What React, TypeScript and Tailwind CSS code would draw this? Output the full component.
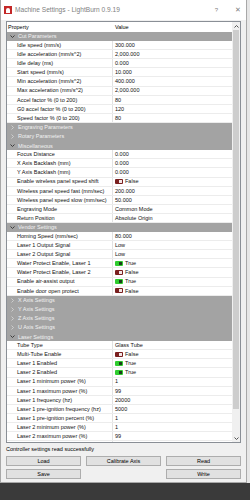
type Row =
  | { group: string; open: boolean }
  | { name: string; value: string; toggle?: boolean };

const rows: Row[] = [
  { group: "Cut Parameters", open: true },
  { name: "Idle speed (mm/s)", value: "300.000" },
  { name: "Idle acceleration (mm/s^2)", value: "2,000.000" },
  { name: "Idle delay (ms)", value: "0.000" },
  { name: "Start speed (mm/s)", value: "10.000" },
  { name: "Min acceleration (mm/s^2)", value: "400.000" },
  { name: "Max acceleration (mm/s^2)", value: "2,000.000" },
  { name: "Accel factor % (0 to 200)", value: "80" },
  { name: "G0 accel factor % (0 to 200)", value: "120" },
  { name: "Speed factor % (0 to 200)", value: "80" },
  { group: "Engraving Parameters", open: false },
  { group: "Rotary Parameters", open: false },
  { group: "Miscellaneous", open: true },
  { name: "Focus Distance", value: "0.000" },
  { name: "X Axis Backlash (mm)", value: "0.000" },
  { name: "Y Axis Backlash (mm)", value: "0.000" },
  { name: "Enable wireless panel speed shift", value: "False", toggle: true },
  { name: "Wireless panel speed fast (mm/sec)", value: "200.000" },
  { name: "Wireless panel speed slow (mm/sec)", value: "50.000" },
  { name: "Engraving Mode", value: "Common Mode" },
  { name: "Return Position", value: "Absolute Origin" },
  { group: "Vendor Settings", open: true },
  { name: "Homing Speed (mm/sec)", value: "80.000" },
  { name: "Laser 1 Output Signal", value: "Low" },
  { name: "Laser 2 Output Signal", value: "Low" },
  { name: "Water Protect Enable, Laser 1", value: "True", toggle: true },
  { name: "Water Protect Enable, Laser 2", value: "False", toggle: true },
  { name: "Enable air-assist output", value: "True", toggle: true },
  { name: "Enable door open protect", value: "False", toggle: true },
  { group: "X Axis Settings", open: false },
  { group: "Y Axis Settings", open: false },
  { group: "Z Axis Settings", open: false },
  { group: "U Axis Settings", open: false },
  { group: "Laser Settings", open: true },
  { name: "Tube Type", value: "Glass Tube" },
  { name: "Multi-Tube Enable", value: "False", toggle: true },
  { name: "Laser 1 Enabled", value: "True", toggle: true },
  { name: "Laser 2 Enabled", value: "True", toggle: true },
  { name: "Laser 1 minimum power (%)", value: "1" },
  { name: "Laser 1 maximum power (%)", value: "99" },
  { name: "Laser 1 frequency (hz)", value: "20000" },
  { name: "Laser 1 pre-ignition frequency (hz)", value: "5000" },
  { name: "Laser 1 pre-ignition percent (%)", value: "1" },
  { name: "Laser 2 minimum power (%)", value: "1" },
  { name: "Laser 2 maximum power (%)", value: "99" },
  { name: "Laser 2 frequency (hz)", value: "20000" },
];

function Toggle({ on }: { on: boolean }) {
  return on ? (
    <span className="w-[8px] h-[5px] rounded-[1px] bg-[#2ecc2e] flex items-center justify-end pr-[1px] mr-[2px]">
      <span className="w-[3px] h-[3px] bg-[#1a3d1a]" />
    </span>
  ) : (
    <span className="w-[8px] h-[5px] rounded-[1px] bg-[#7a1f1f] flex items-center justify-end pr-[1px] mr-[2px]">
      <span className="w-[3px] h-[3px] bg-[#f2e6e6]" />
    </span>
  );
}

function Chevron({ open }: { open: boolean }) {
  return (
    <svg width="5" height="5" viewBox="0 0 10 10" className="ml-[3px] mr-[3px]">
      {open ? (
        <path d="M1 3 L5 7 L9 3" stroke="#3d3d3d" strokeWidth="2" fill="none" />
      ) : (
        <path d="M3 1 L7 5 L3 9" stroke="#d8d8d8" strokeWidth="1.6" fill="none" />
      )}
    </svg>
  );
}

export default function App() {
  return (
    <div
      className="w-[250px] h-[500px] flex flex-col bg-[#393939] overflow-hidden"
      style={{ fontFamily: '"Liberation Sans", Arial, sans-serif' }}
    >
      <div className="flex h-[483px]">
        <div className="w-[247px] flex flex-col bg-[#f0f0f0] border-r border-b border-l border-[#a8a8a8]">
          {/* title bar */}
          <div className="h-[20px] bg-white flex items-center">
            <div className="w-[8px] h-[8px] ml-[3px] bg-[#c42828] flex items-end justify-center">
              <div className="w-[4px] h-[5px] bg-white rounded-t-full mb-[1px]" />
            </div>
            <span className="ml-[3px] text-[6.6px] text-[#808080]">Machine Settings - LightBurn 0.9.19</span>
            <span className="ml-auto text-[6px] text-[#808080]">?</span>
            <span className="ml-[17px] mr-[5px] text-[7px] text-[#808080]">✕</span>
          </div>

          {/* property grid */}
          <div className="mx-[5px] mt-[1px] h-[422px] border border-[#8a8f96] bg-white flex text-[5.5px]">
            <div className="flex-1 flex flex-col overflow-hidden">
              <div className="h-[10px] shrink-0 flex items-center text-black">
                <span className="w-[106px] pl-[1px]">Property</span>
                <span className="pl-[2px]">Value</span>
              </div>
              {rows.map((r, i) =>
                "group" in r ? (
                  <div key={i} className="h-[9.1px] shrink-0 bg-[#a3a3a3] flex items-center text-[#f2f2f2]">
                    <Chevron open={r.open} />
                    <span>{r.group}</span>
                  </div>
                ) : (
                  <div key={i} className="h-[9.1px] shrink-0 flex border-b border-[#ececec] text-[#111]">
                    <span className="w-[106px] pl-[10px] flex items-center border-r border-[#e2e2e2]">{r.name}</span>
                    <span className="pl-[2px] flex items-center">
                      {r.toggle && <Toggle on={r.value === "True"} />}
                      {r.value}
                    </span>
                  </div>
                )
              )}
            </div>
            {/* scrollbar */}
            <div className="w-[8px] bg-[#f0f0f0] flex flex-col">
              <div className="h-[8px] flex items-center justify-center">
                <svg width="5" height="3" viewBox="0 0 10 6">
                  <path d="M1 5 L5 1 L9 5" stroke="#555" strokeWidth="2" fill="none" />
                </svg>
              </div>
              <div className="mx-[1px] h-[379px] bg-[#cdcdcd]" />
              <div className="flex-1" />
              <div className="h-[8px] flex items-center justify-center">
                <svg width="5" height="3" viewBox="0 0 10 6">
                  <path d="M1 1 L5 5 L9 1" stroke="#555" strokeWidth="2" fill="none" />
                </svg>
              </div>
            </div>
          </div>

          <div className="h-[13px] px-[5px] flex items-center text-[5.5px] text-black">
            Controller settings read successfully
          </div>

          <div className="px-[5px] grid grid-cols-3 gap-x-[5px] gap-y-[3px] text-[5.5px] text-black">
            <button className="h-[10px] bg-[#e1e1e1] border border-[#adadad]">Load</button>
            <button className="h-[10px] bg-[#e1e1e1] border border-[#adadad]">Calibrate Axis</button>
            <button className="h-[10px] bg-[#e1e1e1] border border-[#adadad]">Read</button>
            <button className="h-[10px] bg-[#e1e1e1] border border-[#adadad]">Save</button>
            <div />
            <button className="h-[10px] bg-[#e1e1e1] border border-[#adadad]">Write</button>
          </div>
        </div>
        <div className="flex-1 bg-[#e6e6e6]" />
      </div>
      <div className="flex-1 bg-[#3a3a3a]" />
    </div>
  );
}
